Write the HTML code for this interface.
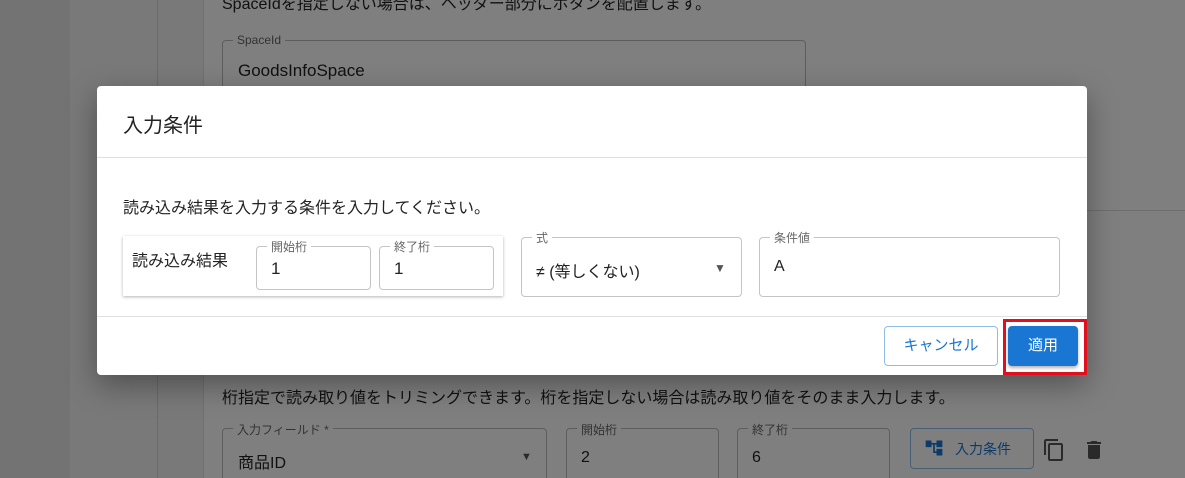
<!DOCTYPE html>
<html><head><meta charset="utf-8"><style>
*{box-sizing:border-box;margin:0;padding:0}
html,body{width:1185px;height:478px;overflow:hidden}
body{position:relative;background:#f2f2f2;font-family:"Liberation Sans","Noto Sans CJK JP",sans-serif}
.abs{position:absolute}
.bgtext{color:#222;font-size:16px}
.fs{position:absolute;border:1px solid #bbb;border-radius:4px}
.lg{position:absolute;top:-8px;left:10px;background:#fff;padding:0 4px;font-size:12px;color:#666}
.dfs{position:absolute;border:1px solid #c4c4c4;border-radius:4px;background:#fff}
.dlg{position:absolute;top:-9px;left:10px;background:#fff;padding:0 4px;font-size:12px;color:#666}
.val{position:absolute;font-size:16px;color:#222}
</style></head><body>
<div class="abs" style="left:0;top:0;width:70px;height:478px;background:#e6e6e6"></div>
<div class="abs" style="left:157px;top:0;width:1px;height:478px;background:#d4d4d4"></div>
<div class="abs" style="left:203px;top:0;width:982px;height:478px;background:#fff;border-left:1px solid #e0e0e0"></div>
<div class="abs bgtext" style="left:222px;top:-10px">SpaceIdを指定しない場合は、ヘッダー部分にボタンを配置します。</div>
<div class="fs" style="left:222px;top:40px;width:584px;height:60px"><span class="lg">SpaceId</span><span class="val" style="left:15px;top:20px;font-size:17px">GoodsInfoSpace</span></div>
<div class="abs" style="left:203px;top:210px;width:982px;height:1px;background:#ddd"></div>
<div class="abs bgtext" style="left:222px;top:384px">桁指定で読み取り値をトリミングできます。桁を指定しない場合は読み取り値をそのまま入力します。</div>
<div class="fs" style="left:222px;top:428px;width:325px;height:60px"><span class="lg">入力フィールド *</span><span class="val" style="left:15px;top:20px">商品ID</span><span class="abs" style="left:298px;top:22px;font-size:11px;color:#555">▼</span></div>
<div class="fs" style="left:566px;top:428px;width:153px;height:60px"><span class="lg">開始桁</span><span class="val" style="left:14px;top:20px">2</span></div>
<div class="fs" style="left:737px;top:428px;width:153px;height:60px"><span class="lg">終了桁</span><span class="val" style="left:14px;top:20px">6</span></div>
<div class="abs" style="left:910px;top:428px;width:124px;height:41px;border:1px solid #90bde8;border-radius:4px;color:#1976d2;font-size:14px;padding:10px 0 0 44px">入力条件</div>
<svg class="abs" style="left:924px;top:438px" width="20" height="20" viewBox="0 0 24 24"><path fill="#1976d2" d="M22 11V3h-7v3H9V3H2v8h7V8h2v10h4v3h7v-8h-7v3h-2V8h2v3z"/></svg>
<svg class="abs" style="left:1042px;top:438px" width="24" height="24" viewBox="0 0 24 24"><path fill="#555" d="M16 1H4c-1.1 0-2 .9-2 2v14h2V3h12V1zm3 4H8c-1.1 0-2 .9-2 2v14c0 1.1.9 2 2 2h11c1.1 0 2-.9 2-2V7c0-1.1-.9-2-2-2zm0 16H8V7h11v14z"/></svg>
<svg class="abs" style="left:1082px;top:438px" width="24" height="24" viewBox="0 0 24 24"><path fill="#555" d="M6 19c0 1.1.9 2 2 2h8c1.1 0 2-.9 2-2V7H6v12zM19 4h-3.5l-1-1h-5l-1 1H5v2h14V4z"/></svg>

<div class="abs" style="left:0;top:0;width:1185px;height:478px;background:rgba(0,0,0,0.5)"></div>

<div class="abs" style="left:97px;top:86px;width:990px;height:289px;background:#fff;border-radius:4px;box-shadow:0 10px 30px rgba(0,0,0,.35)">
<div class="abs" style="left:26px;top:23px;font-size:20px;color:#222">入力条件</div>
<div class="abs" style="left:0;top:71px;width:990px;height:1px;background:#e0e0e0"></div>
<div class="abs" style="left:26px;top:108px;font-size:16px;color:#222">読み込み結果を入力する条件を入力してください。</div>
<div class="abs" style="left:26px;top:150px;width:380px;height:60px;background:#fff;box-shadow:0 1px 3px rgba(0,0,0,.3)">
<span class="val" style="left:9px;top:11px">読み込み結果</span>
<div class="dfs" style="left:133px;top:10px;width:115px;height:44px"><span class="dlg">開始桁</span><span class="val" style="left:14px;top:12px;font-size:17px">1</span></div>
<div class="dfs" style="left:256px;top:10px;width:115px;height:44px"><span class="dlg">終了桁</span><span class="val" style="left:14px;top:12px;font-size:17px">1</span></div>
</div>
<div class="dfs" style="left:424px;top:151px;width:221px;height:60px"><span class="dlg">式</span><span class="val" style="left:14px;top:20px">≠ (等しくない)</span><span class="abs" style="left:192px;top:23px;font-size:12px;color:#555">▼</span></div>
<div class="dfs" style="left:662px;top:151px;width:301px;height:60px"><span class="dlg">条件値</span><span class="val" style="left:14px;top:20px">A</span></div>
<div class="abs" style="left:0;top:230px;width:990px;height:1px;background:#e0e0e0"></div>
<div class="abs" style="left:787px;top:240px;width:114px;height:40px;border:1px solid #90bde8;border-radius:4px;color:#1976d2;font-size:15px;text-align:center;line-height:38px">キャンセル</div>
<div class="abs" style="left:906px;top:233px;width:84px;height:56px;border:3px solid #e0101e"></div>
<div class="abs" style="left:911px;top:240px;width:70px;height:40px;background:#1976d2;border-radius:4px;color:#fff;font-size:15px;text-align:center;line-height:40px;box-shadow:0 2px 3px rgba(0,0,0,.3)">適用</div>
</div>
</body></html>
